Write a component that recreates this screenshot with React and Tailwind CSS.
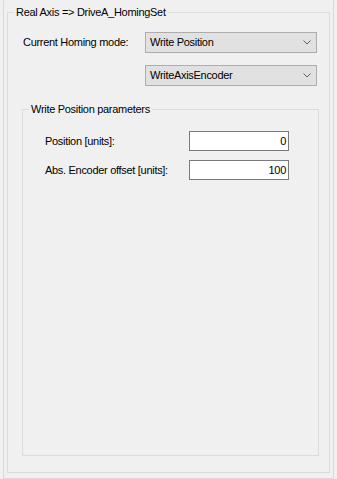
function Chevron() {
  return (
    <svg width="8" height="5" viewBox="0 0 8 5" className="shrink-0">
      <path d="M0.5 0.5 L4 4 L7.5 0.5" fill="none" stroke="#606060" strokeWidth="1" />
    </svg>
  );
}

function ComboBox({ value }) {
  return (
    <div className="flex items-center justify-between w-[172px] h-[21px] bg-[#e1e1e1] border border-[#adadad] pl-[4px] pr-[5px]">
      <span>{value}</span>
      <Chevron />
    </div>
  );
}

function NumberBox({ value }) {
  return (
    <div className="w-[100px] h-[20px] bg-white border border-[#7a7a7a] flex items-center justify-end pr-[2px]">
      {value}
    </div>
  );
}

function GroupBox({ title, className = '', children }) {
  return (
    <fieldset className={`border border-[#dcdcdc] flex flex-col min-h-0 ${className}`}>
      <legend className="ml-[6px] px-[2px] leading-[13px]">{title}</legend>
      {children}
    </fieldset>
  );
}

export default function App() {
  return (
    <div
      className="w-[337px] h-[479px] bg-[#f0f0f0] text-black text-[11px] tracking-[-0.3px] px-[3px] flex flex-col"
      style={{ fontFamily: '"Liberation Sans", Arial, sans-serif' }}
    >
      <div className="flex-1 flex flex-col border-x border-b border-[#dadada] px-[3px] pb-[5px]">
        <GroupBox title="Real Axis => DriveA_HomingSet" className="flex-1 mt-[6px]">
          <div className="flex items-center pl-[15px] mt-[13px]">
            <span className="w-[122px]">Current Homing mode:</span>
            <ComboBox value="Write Position" />
          </div>
          <div className="flex pl-[137px] mt-[12px]">
            <ComboBox value="WriteAxisEncoder" />
          </div>
          <GroupBox title="Write Position parameters" className="flex-1 mx-[14px] mt-[17px] mb-[16px] mr-[10px]">
            <div className="flex items-center pl-[22px] mt-[15px]">
              <span className="w-[144px]">Position [units]:</span>
              <NumberBox value="0" />
            </div>
            <div className="flex items-center pl-[22px] mt-[9px]">
              <span className="w-[144px]">Abs. Encoder offset [units]:</span>
              <NumberBox value="100" />
            </div>
          </GroupBox>
        </GroupBox>
      </div>
    </div>
  );
}
